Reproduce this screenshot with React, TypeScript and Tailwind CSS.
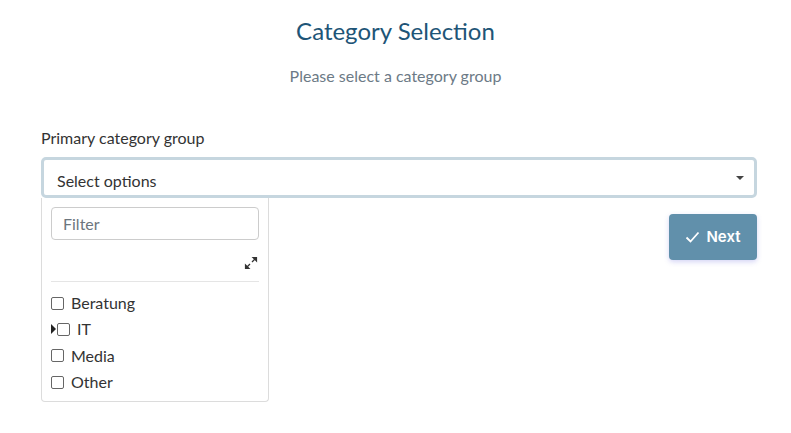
import { useState } from "react";

const options = ["Beratung", "IT", "Media", "Other"];

function ExpandIcon() {
  return (
    <svg width="14" height="14" viewBox="0 0 14 14" fill="none" stroke="#333" strokeWidth="1.2">
      <path d="M8 6 L11.5 2.5" />
      <path d="M9 1.5 H12.5 V5 Z" fill="#333" />
      <path d="M6 8 L2.5 11.5" />
      <path d="M1.5 9 V12.5 H5 Z" fill="#333" />
    </svg>
  );
}

export default function App() {
  const [checked, setChecked] = useState<Record<string, boolean>>({});

  return (
    <div className="min-h-[433px] w-[791px] bg-white font-['Lato',sans-serif] text-[#333]">
      <div className="flex flex-col items-center pt-[17px]">
        <h1 className="text-[24px] leading-[28px] text-[#1e5577]">Category Selection</h1>
        <p className="mt-[22px] text-[16px] leading-[18px] text-[#6c7a86]">Please select a category group</p>
      </div>

      <div className="pl-[41px] pr-[34px] pt-[43px]">
        <label className="block text-[16px] leading-[20px] text-[#333]">Primary category group</label>

        <div className="mt-[9px] flex h-[41px] items-center justify-between rounded-[5px] border-[3px] border-[#c6d6df] pl-[13px] pr-[10px]">
          <span className="pt-[7px] text-[16px] leading-[20px] text-[#333]">Select options</span>
          <span className="h-0 w-0 border-x-[4px] border-t-[4px] border-x-transparent border-t-[#444]" />
        </div>

        <div className="flex items-start justify-between">
          <div className="w-[228px] rounded-b-[4px] border border-t-0 border-[#dcdcdc] px-[9px] pt-[9px] pb-[6px]">
            <div className="flex h-[33px] items-center rounded-[4px] border border-[#ccc] px-[11px] text-[16px] text-[#6c757d]">
              Filter
            </div>
            <div className="flex h-[41px] items-center justify-end pr-[1px] pt-[4px]">
              <ExpandIcon />
            </div>
            <div className="border-t border-[#e5e5e5]" />
            <div className="pt-[8px]">
              {options.map((o) => (
                <label key={o} className="flex h-[26.3px] items-center text-[16px] text-[#333]">
                  {o === "IT" && (
                    <span className="mr-[1px] h-0 w-0 border-y-[5px] border-l-[5px] border-y-transparent border-l-[#222]" />
                  )}
                  <input
                    type="checkbox"
                    checked={!!checked[o]}
                    onChange={() => setChecked({ ...checked, [o]: !checked[o] })}
                    className="m-0 h-[13px] w-[13px] appearance-none rounded-[2px] border border-[#666] bg-white"
                  />
                  <span className="ml-[7px]">{o}</span>
                </label>
              ))}
            </div>
          </div>

          <button className="mt-[16px] flex h-[46px] w-[88px] items-center justify-center gap-[6px] rounded-[4px] bg-[#6190ab] font-['Inter',sans-serif] text-[15px] font-semibold text-white shadow-[0_2px_5px_rgba(90,90,220,0.25)]">
            <svg width="15" height="12" viewBox="0 0 15 12" fill="none" stroke="white" strokeWidth="1.8">
              <path d="M1.5 6.5 L5.5 10.5 L13.5 1.5" />
            </svg>
            Next
          </button>
        </div>
      </div>
    </div>
  );
}
